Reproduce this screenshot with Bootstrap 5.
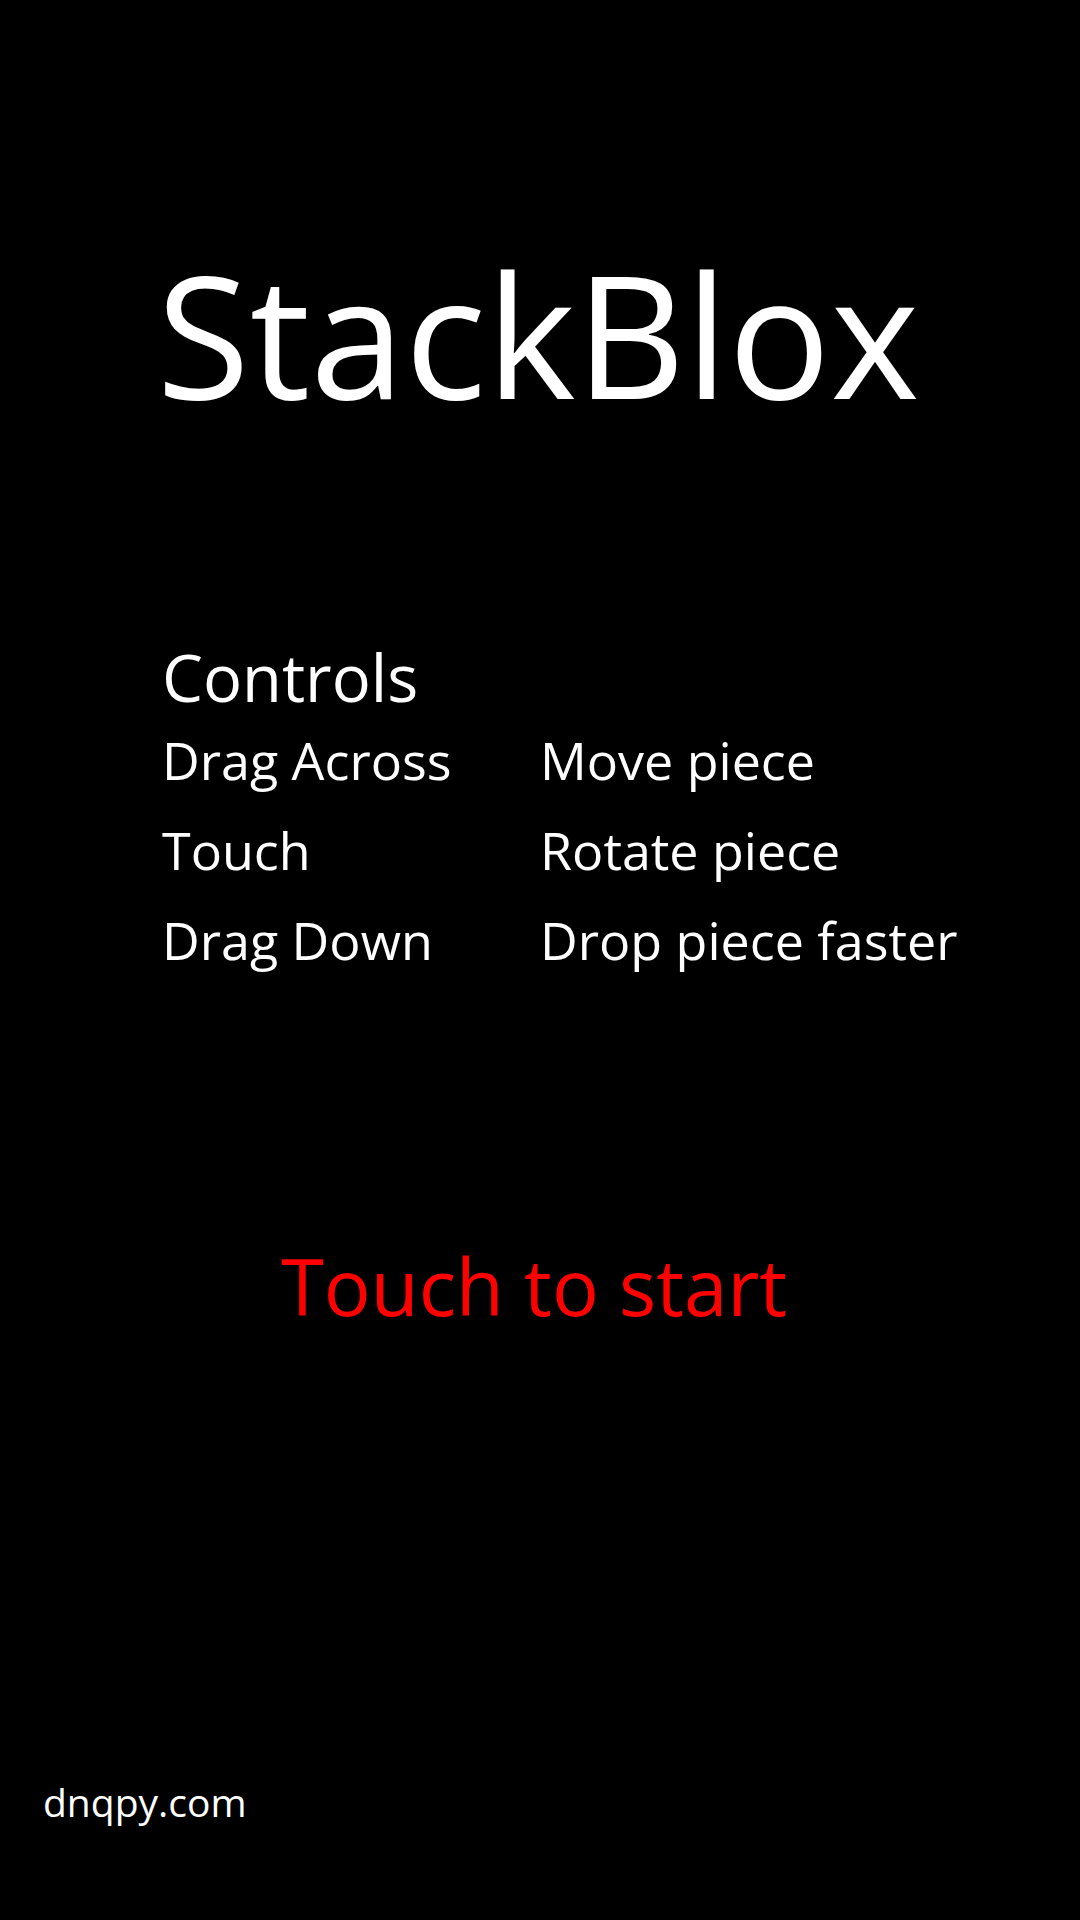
<!DOCTYPE html>
<html lang="en">
<head>
<meta charset="utf-8">
<meta name="viewport" content="width=device-width, initial-scale=1">
<title>StackBlox</title>
<link rel="stylesheet" href="https://cdn.jsdelivr.net/npm/bootstrap@5.3.0/dist/css/bootstrap.min.css">
<style>
body { background: #000; color: #fff; font-family: "Open Sans", "Noto Sans", sans-serif; font-kerning: normal; text-rendering: optimizeLegibility; }
.title-screen { padding: 213px 0 90px; }
.game-title { font-size: 170px; line-height: 240px; padding-right: 4px; }
.controls { margin-top: 186px; padding-left: 15%; }
.controls-heading { font-size: 65px; line-height: 76px; }
.control-row { display: grid; grid-template-columns: 7fr 10fr; font-size: 52px; line-height: 90px; }
.start-btn { color: #f00; font-size: 78px; line-height: 110px; margin-top: 246px; margin-right: 12px; }
.site-footer { padding-left: 43px; }
.site-link { font-size: 39px; line-height: 56px; }
</style>
</head>
<body>
<main class="title-screen min-vh-100 d-flex flex-column">
  <h1 class="game-title fw-normal text-center m-0">StackBlox</h1>
  <section class="controls">
    <h2 class="controls-heading fw-normal m-0">Controls</h2>
    <dl class="m-0">
      <div class="control-row"><dt class="fw-normal">Drag Across</dt><dd class="m-0 text-nowrap">Move piece</dd></div>
      <div class="control-row"><dt class="fw-normal">Touch</dt><dd class="m-0 text-nowrap">Rotate piece</dd></div>
      <div class="control-row"><dt class="fw-normal">Drag Down</dt><dd class="m-0 text-nowrap">Drop piece faster</dd></div>
    </dl>
  </section>
  <button type="button" class="start-btn bg-transparent border-0 p-0 align-self-center">Touch to start</button>
  <footer class="site-footer mt-auto"><a class="site-link d-inline-block text-white text-decoration-none" href="https://dnqpy.com">dnqpy.com</a></footer>
</main>
<script src="https://cdn.jsdelivr.net/npm/bootstrap@5.3.0/dist/js/bootstrap.bundle.min.js"></script>
</body>
</html>
